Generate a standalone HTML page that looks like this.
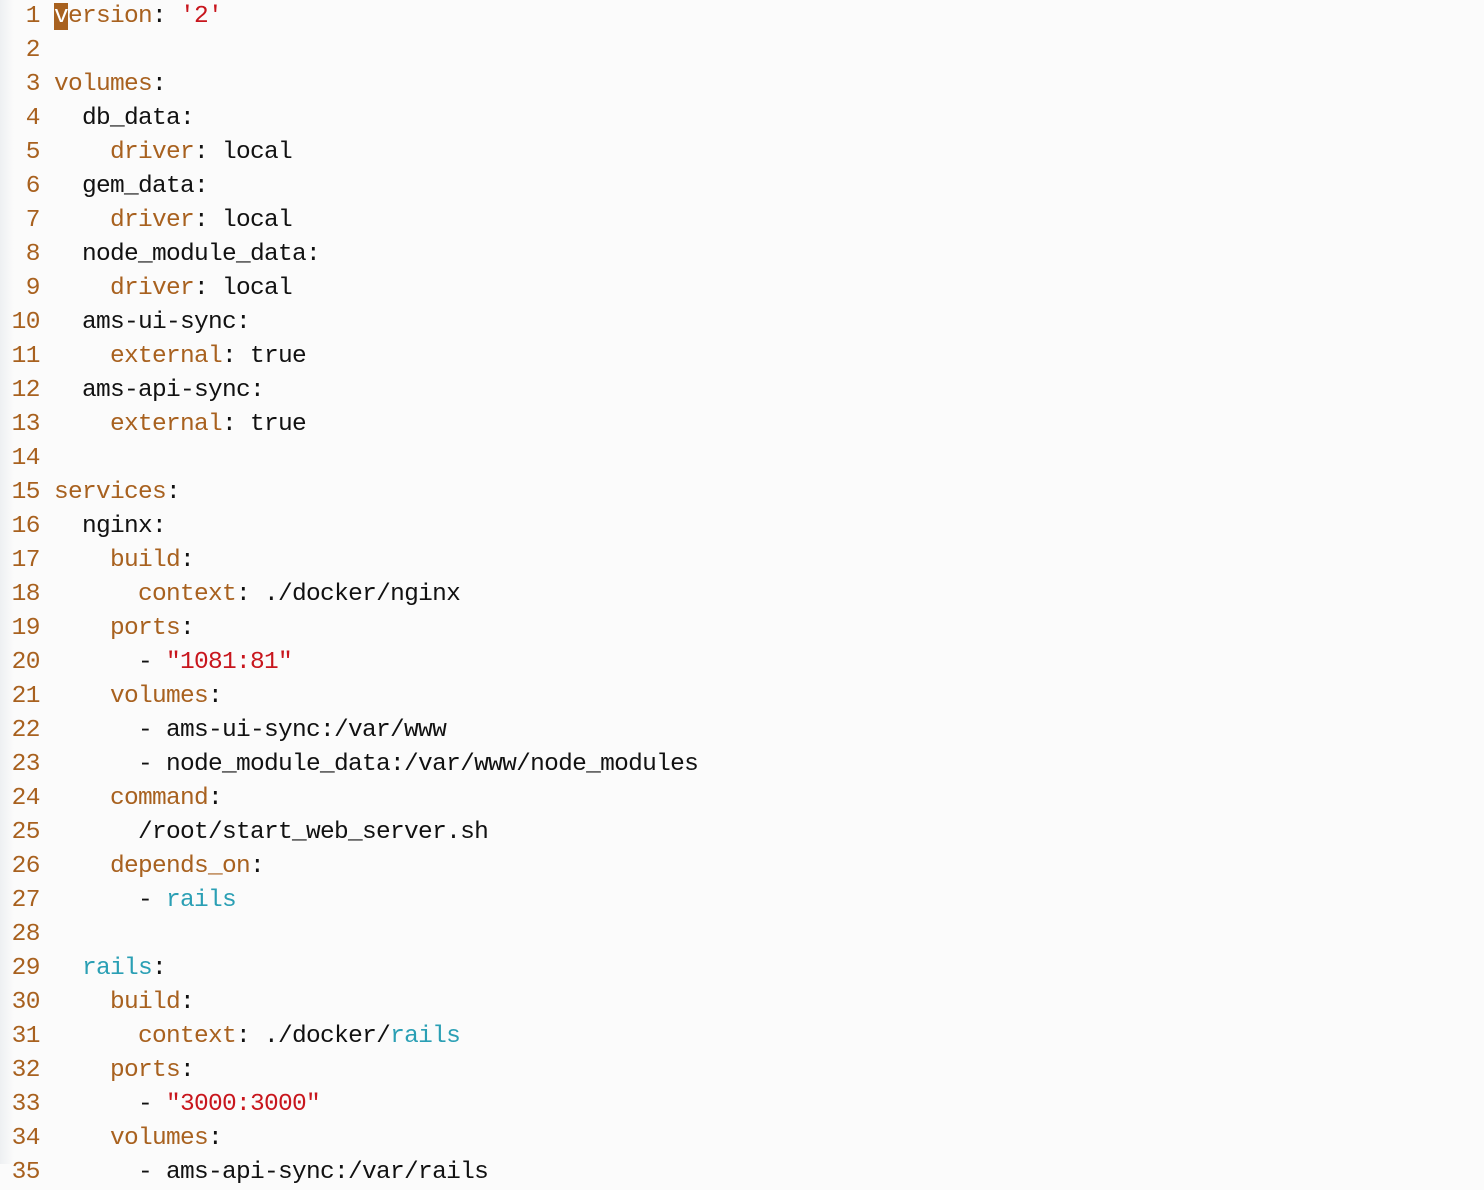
<!DOCTYPE html>
<html><head><meta charset="utf-8"><style>
html,body{margin:0;padding:0;width:1484px;height:1164px;overflow:hidden;background:#fbfbfb;}
.g{position:absolute;left:0;top:0;width:14px;height:1164px;background:linear-gradient(90deg,#eef0f2,#fbfbfb);}
pre{position:absolute;left:0;top:0;margin:0;font-family:"Liberation Mono",monospace;font-size:24.5px;letter-spacing:-0.7px;line-height:34px;color:#111;}
.n{display:inline-block;width:40px;text-align:right;color:#a8611f;margin-right:14px;letter-spacing:-0.5px;}
.k{color:#a8611f}.s{color:#c8161d}.c{color:#2a9fb4}
.cur{background:#a8611f;color:#fff}
</style></head><body><div class="g"></div><pre>
<span class="n">1</span><span class="k"><span class="cur">v</span>ersion</span>: <span class="s">'2'</span>
<span class="n">2</span>
<span class="n">3</span><span class="k">volumes</span>:
<span class="n">4</span>  db_data:
<span class="n">5</span>    <span class="k">driver</span>: local
<span class="n">6</span>  gem_data:
<span class="n">7</span>    <span class="k">driver</span>: local
<span class="n">8</span>  node_module_data:
<span class="n">9</span>    <span class="k">driver</span>: local
<span class="n">10</span>  ams-ui-sync:
<span class="n">11</span>    <span class="k">external</span>: true
<span class="n">12</span>  ams-api-sync:
<span class="n">13</span>    <span class="k">external</span>: true
<span class="n">14</span>
<span class="n">15</span><span class="k">services</span>:
<span class="n">16</span>  nginx:
<span class="n">17</span>    <span class="k">build</span>:
<span class="n">18</span>      <span class="k">context</span>: ./docker/nginx
<span class="n">19</span>    <span class="k">ports</span>:
<span class="n">20</span>      - <span class="s">"1081:81"</span>
<span class="n">21</span>    <span class="k">volumes</span>:
<span class="n">22</span>      - ams-ui-sync:/var/www
<span class="n">23</span>      - node_module_data:/var/www/node_modules
<span class="n">24</span>    <span class="k">command</span>:
<span class="n">25</span>      /root/start_web_server.sh
<span class="n">26</span>    <span class="k">depends_on</span>:
<span class="n">27</span>      - <span class="c">rails</span>
<span class="n">28</span>
<span class="n">29</span>  <span class="c">rails</span>:
<span class="n">30</span>    <span class="k">build</span>:
<span class="n">31</span>      <span class="k">context</span>: ./docker/<span class="c">rails</span>
<span class="n">32</span>    <span class="k">ports</span>:
<span class="n">33</span>      - <span class="s">"3000:3000"</span>
<span class="n">34</span>    <span class="k">volumes</span>:
<span class="n">35</span>      - ams-api-sync:/var/rails
</pre></body></html>
